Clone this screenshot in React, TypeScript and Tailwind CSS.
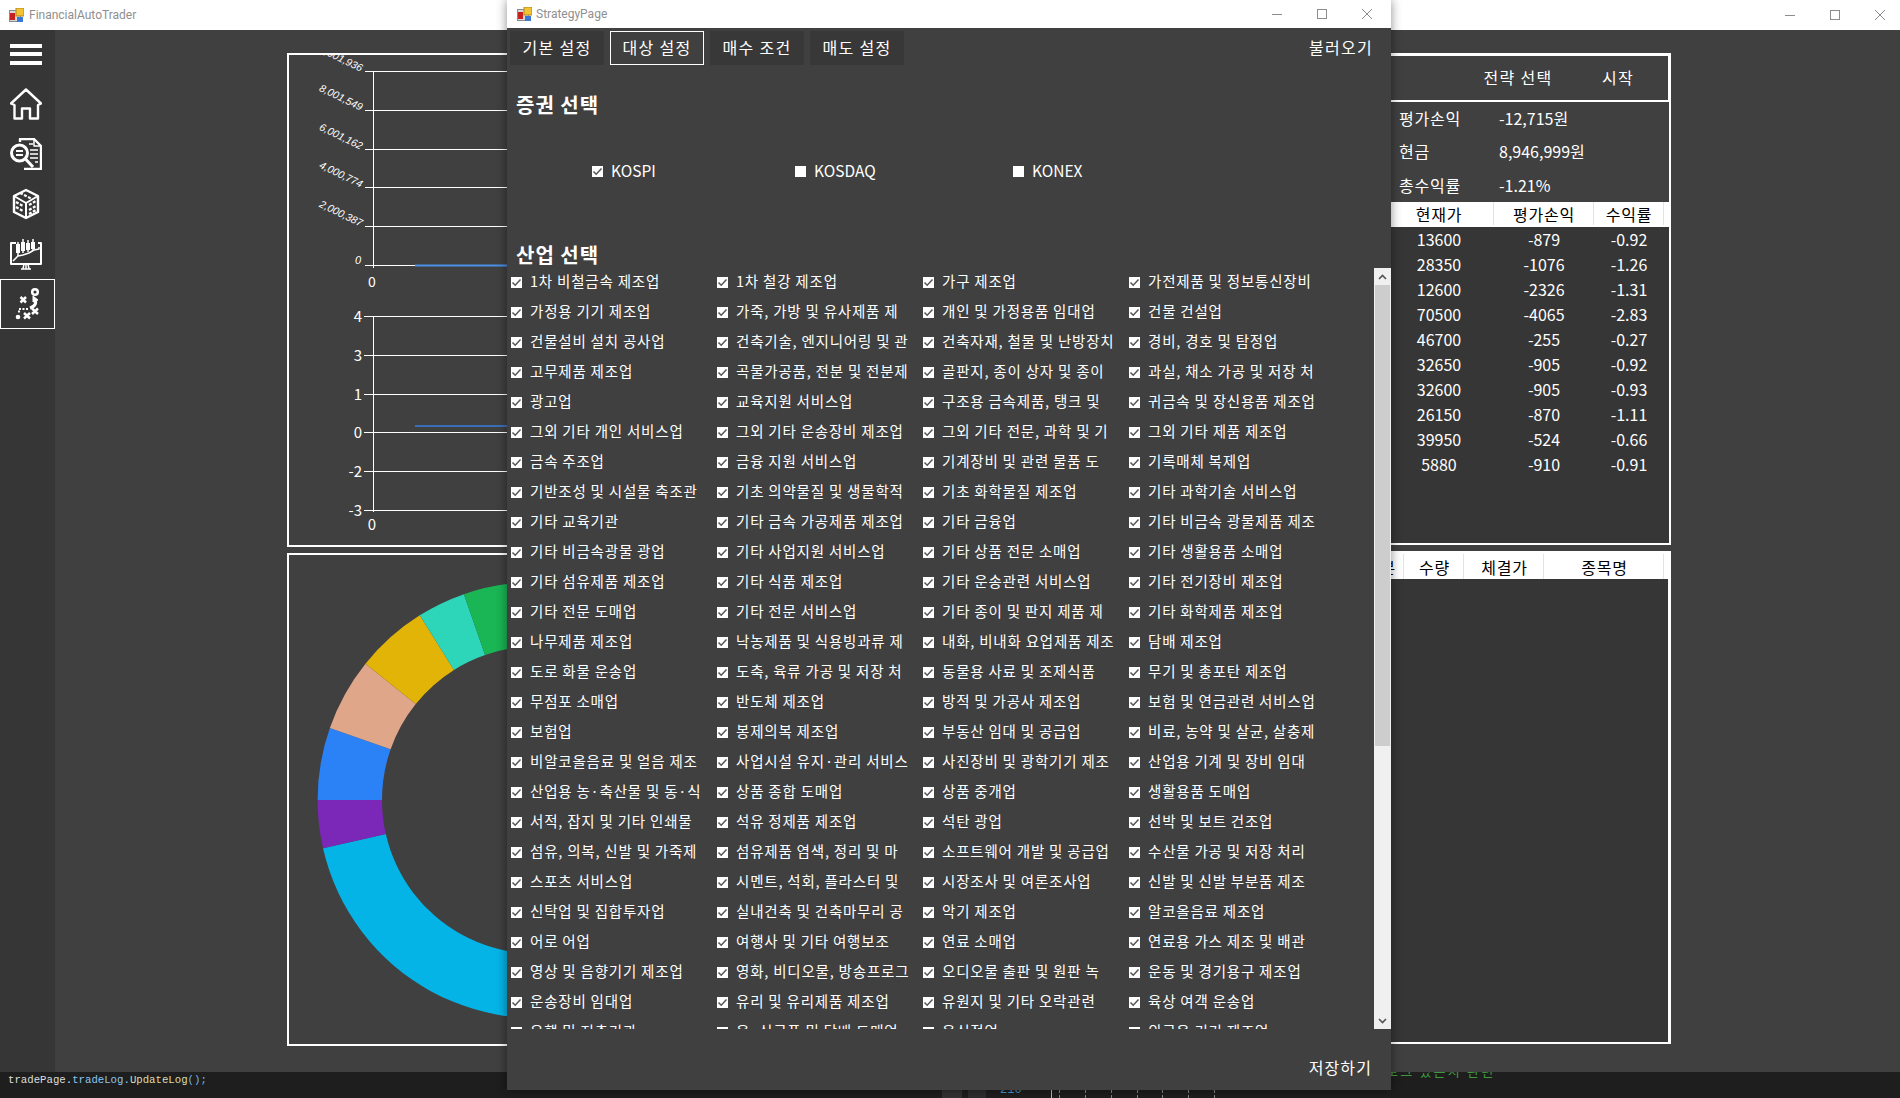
import React from "react";

const ITEMS: string[][] = [
  ["1차 비철금속 제조업", "1차 철강 제조업", "가구 제조업", "가전제품 및 정보통신장비"],
  ["가정용 기기 제조업", "가죽, 가방 및 유사제품 제", "개인 및 가정용품 임대업", "건물 건설업"],
  ["건물설비 설치 공사업", "건축기술, 엔지니어링 및 관", "건축자재, 철물 및 난방장치", "경비, 경호 및 탐정업"],
  ["고무제품 제조업", "곡물가공품, 전분 및 전분제", "골판지, 종이 상자 및 종이", "과실, 채소 가공 및 저장 처"],
  ["광고업", "교육지원 서비스업", "구조용 금속제품, 탱크 및", "귀금속 및 장신용품 제조업"],
  ["그외 기타 개인 서비스업", "그외 기타 운송장비 제조업", "그외 기타 전문, 과학 및 기", "그외 기타 제품 제조업"],
  ["금속 주조업", "금융 지원 서비스업", "기계장비 및 관련 물품 도", "기록매체 복제업"],
  ["기반조성 및 시설물 축조관", "기초 의약물질 및 생물학적", "기초 화학물질 제조업", "기타 과학기술 서비스업"],
  ["기타 교육기관", "기타 금속 가공제품 제조업", "기타 금융업", "기타 비금속 광물제품 제조"],
  ["기타 비금속광물 광업", "기타 사업지원 서비스업", "기타 상품 전문 소매업", "기타 생활용품 소매업"],
  ["기타 섬유제품 제조업", "기타 식품 제조업", "기타 운송관련 서비스업", "기타 전기장비 제조업"],
  ["기타 전문 도매업", "기타 전문 서비스업", "기타 종이 및 판지 제품 제", "기타 화학제품 제조업"],
  ["나무제품 제조업", "낙농제품 및 식용빙과류 제", "내화, 비내화 요업제품 제조", "담배 제조업"],
  ["도로 화물 운송업", "도축, 육류 가공 및 저장 처", "동물용 사료 및 조제식품", "무기 및 총포탄 제조업"],
  ["무점포 소매업", "반도체 제조업", "방적 및 가공사 제조업", "보험 및 연금관련 서비스업"],
  ["보험업", "봉제의복 제조업", "부동산 임대 및 공급업", "비료, 농약 및 살균, 살충제"],
  ["비알코올음료 및 얼음 제조", "사업시설 유지·관리 서비스", "사진장비 및 광학기기 제조", "산업용 기계 및 장비 임대"],
  ["산업용 농·축산물 및 동·식", "상품 종합 도매업", "상품 중개업", "생활용품 도매업"],
  ["서적, 잡지 및 기타 인쇄물", "석유 정제품 제조업", "석탄 광업", "선박 및 보트 건조업"],
  ["섬유, 의복, 신발 및 가죽제", "섬유제품 염색, 정리 및 마", "소프트웨어 개발 및 공급업", "수산물 가공 및 저장 처리"],
  ["스포츠 서비스업", "시멘트, 석회, 플라스터 및", "시장조사 및 여론조사업", "신발 및 신발 부분품 제조"],
  ["신탁업 및 집합투자업", "실내건축 및 건축마무리 공", "악기 제조업", "알코올음료 제조업"],
  ["어로 어업", "여행사 및 기타 여행보조", "연료 소매업", "연료용 가스 제조 및 배관"],
  ["영상 및 음향기기 제조업", "영화, 비디오물, 방송프로그", "오디오물 출판 및 원판 녹", "운동 및 경기용구 제조업"],
  ["운송장비 임대업", "유리 및 유리제품 제조업", "유원지 및 기타 오락관련", "육상 여객 운송업"],
  ["은행 및 저축기관", "음·식료품 및 담배 도매업", "음식점업", "의료용 기기 제조업"],
];

const ROWS = [
  ["13600", "-879", "-0.92"],
  ["28350", "-1076", "-1.26"],
  ["12600", "-2326", "-1.31"],
  ["70500", "-4065", "-2.83"],
  ["46700", "-255", "-0.27"],
  ["32650", "-905", "-0.92"],
  ["32600", "-905", "-0.93"],
  ["26150", "-870", "-1.11"],
  ["39950", "-524", "-0.66"],
  ["5880", "-910", "-0.91"],
];

function AppIcon() {
  return (
    <svg width="15" height="15" viewBox="0 0 15 15" className="shrink-0">
      <rect x="0.5" y="2.5" width="11" height="11" fill="#d8d8d8" stroke="#8a8a8a" />
      <rect x="7" y="0" width="8" height="8" fill="#f2c230" stroke="#b08a20" />
      <rect x="1" y="5" width="5" height="7" fill="#c8201c" />
      <rect x="8" y="9" width="6" height="5" fill="#3a78d8" />
    </svg>
  );
}

function WinControls() {
  return (
    <div className="flex items-center gap-[35px] text-[#8c8c8c]">
      <svg width="10" height="10" viewBox="0 0 10 10"><path d="M0 5.5H10" stroke="currentColor" /></svg>
      <svg width="10" height="10" viewBox="0 0 10 10"><rect x="0.5" y="0.5" width="9" height="9" fill="none" stroke="currentColor" /></svg>
      <svg width="10" height="10" viewBox="0 0 10 10"><path d="M0 0L10 10M10 0L0 10" stroke="currentColor" /></svg>
    </div>
  );
}

function Check({ on = true }: { on?: boolean }) {
  return (
    <span className="flex h-[11px] w-[11px] shrink-0 items-center justify-center bg-white">
      {on && (
        <svg width="11" height="11" viewBox="0 0 11 11">
          <path d="M1.5 5.5L4.2 8.2L9.5 2.5" fill="none" stroke="#555555" strokeWidth="1.5" />
        </svg>
      )}
    </span>
  );
}

function SideIcon({ children }: { children: React.ReactNode }) {
  return (
    <svg width="32" height="32" viewBox="0 0 32 32" fill="none" stroke="white" strokeWidth="2" strokeLinejoin="round" className="block">
      {children}
    </svg>
  );
}

function Sidebar() {
  return (
    <div className="flex w-[55px] shrink-0 flex-col bg-[#363636] pl-[10px] pt-[14px]">
      <div className="flex w-[32px] flex-col gap-[4px]">
        <div className="h-[4px] bg-white" />
        <div className="h-[4px] bg-white" />
        <div className="mt-[1px] h-[4px] bg-white" />
      </div>
      <div className="mt-[23px]">
        <SideIcon>
          <path d="M16 1.5L31 15.5L28 17V30.5H20V20.5H12V30.5H4.5V17L1 15.5Z" strokeWidth="2.4" />
        </SideIcon>
      </div>
      <div className="mt-[18px]">
        <SideIcon>
          <path d="M10 4V1H24L31 8V31H14" strokeWidth="2.4" />
          <path d="M24 1V8H31" strokeWidth="1.5" />
          <circle cx="9.5" cy="15" r="8" strokeWidth="3" />
          <path d="M6 13H13M6 17H13" />
          <path d="M15.5 21L23 29" strokeWidth="3" />
          <path d="M19 6H23M20 12H28M20 16H28M20 20H28M25 24H28" strokeWidth="1.5" />
        </SideIcon>
      </div>
      <div className="mt-[18px]">
        <SideIcon>
          <path d="M16 2L28 8V24L16 30L4 24V8Z" strokeWidth="2.4" />
          <path d="M4 8L16 15L28 8M16 15V30" />
          <path d="M10 5L22 11M6 14L13 18M6 19L13 23M19 17L26 13M19 22L26 18M19 26L26 22" strokeWidth="2.2" strokeDasharray="3 1.5" />
        </SideIcon>
      </div>
      <div className="mt-[18px]">
        <SideIcon>
          <path d="M6 5H1V26H31V5H28" />
          <path d="M11 31H21M16 26V31M13 31L14 26M19 31L18 26" strokeWidth="1.5" />
          <path d="M8 4V18M13 1V15M18 2V14M23 1V13" strokeWidth="1.5" />
          <rect x="6" y="6" width="4" height="9" fill="white" stroke="none" />
          <rect x="11" y="4" width="4" height="9" fill="white" stroke="none" />
          <rect x="16" y="5" width="4" height="7" fill="white" stroke="none" />
          <rect x="21" y="4" width="4" height="7" fill="white" stroke="none" />
          <path d="M3 23L8 18L13 17L19 15L24 12L29 11V9" strokeWidth="1.5" />
        </SideIcon>
      </div>
      <div className="-ml-[10px] mt-[9px] flex h-[50px] w-[55px] items-center justify-center border border-white">
        <svg width="28" height="34" viewBox="0 0 28 34" fill="none" stroke="white" strokeWidth="2.5">
          <circle cx="21" cy="5" r="2.8" />
          <path d="M20 12C23 15 22 19 16 21" strokeWidth="3" />
          <path d="M19 9L24 13L19 15Z" fill="white" strokeWidth="1" />
          <path d="M14 22H5V27" strokeWidth="2" strokeDasharray="2 1.5" />
          <circle cx="4" cy="30" r="2.3" fill="white" stroke="none" />
          <path d="M6.5 10L12 15.5M12 10L6.5 15.5M18 21.5L24 27M24 21.5L18 27M10 26L16 31.5M16 26L10 31.5" />
        </svg>
      </div>
    </div>
  );
}

function polar(r: number, deg: number) {
  const t = (deg * Math.PI) / 180;
  return `${(535.6 + r * Math.cos(t)).toFixed(2)} ${(800 + r * Math.sin(t)).toFixed(2)}`;
}

function seg(a0: number, a1: number) {
  const R = 218;
  const r = 153.6;
  return `M${polar(R, a0)}A${R} ${R} 0 0 1 ${polar(R, a1)}L${polar(r, a1)}A${r} ${r} 0 0 0 ${polar(r, a0)}Z`;
}

const SEGMENTS: [number, number, string][] = [
  [70, 167.2, "#04b4e6"],
  [167.2, 180, "#7b28b8"],
  [180, 199.3, "#2a82f6"],
  [199.3, 218.7, "#e0a68a"],
  [218.7, 237.9, "#e2b408"],
  [237.9, 250.8, "#2dd6b8"],
  [250.8, 290, "#1ab554"],
];

function LineCharts() {
  const top = [
    [71, "10,001,936"],
    [110, "8,001,549"],
    [149, "6,001,162"],
    [187, "4,000,774"],
    [226, "2,000,387"],
  ] as [number, string][];
  const lower = [
    [316, "4"],
    [355, "3"],
    [394, "1"],
    [432, "0"],
    [471, "-2"],
    [510, "-3"],
  ] as [number, string][];
  return (
    <svg viewBox="289 55 811 490" className="block h-full w-full" fill="white">
      {top.map(([y, t]) => (
        <g key={t}>
          <line x1="365" x2="1100" y1={y + 0.5} y2={y + 0.5} stroke="white" />
          <text x="361" y={y + 1} textAnchor="end" fontSize="10.5" fontStyle="italic" fontFamily="'Liberation Sans', sans-serif" transform={`rotate(26 361 ${y})`}>{t}</text>
        </g>
      ))}
      <line x1="365" x2="1100" y1="265.5" y2="265.5" stroke="white" />
      <line x1="415" x2="1100" y1="265.5" y2="265.5" stroke="#4a8fe8" strokeWidth="2" />
      <text x="361" y="264" textAnchor="end" fontSize="11" fontStyle="italic" fontFamily="'Liberation Sans', sans-serif">0</text>
      <line x1="373.5" x2="373.5" y1="71" y2="268" stroke="white" />
      <text x="372" y="287" textAnchor="middle" fontSize="14">0</text>

      {lower.map(([y, t]) => (
        <g key={t}>
          <line x1="364" x2="1100" y1={y + 0.5} y2={y + 0.5} stroke="white" />
          <text x="362" y={y + 6} textAnchor="end" fontSize="15">{t}</text>
        </g>
      ))}
      <line x1="373.5" x2="373.5" y1="316" y2="512" stroke="white" />
      <line x1="415" x2="1100" y1="426" y2="426" stroke="#3a6fb8" strokeWidth="2" />
      <text x="372" y="530" textAnchor="middle" fontSize="15">0</text>
    </svg>
  );
}

function Donut() {
  return (
    <svg viewBox="289 555 811 489" className="block h-full w-full">
      {SEGMENTS.map(([a, b, c]) => (
        <path key={c} d={seg(a, b)} fill={c} />
      ))}
    </svg>
  );
}

function RightPanels() {
  return (
    <div className="flex w-[571px] shrink-0 flex-col text-[16px] text-white">
      <div className="flex h-[49px] justify-end border-b-2 border-r-[3px] border-t-[3px] border-white pb-[2px]">
        <div className="flex w-[100px] items-center justify-center tracking-[1.3px]">전략 선택</div>
        <div className="flex w-[100px] items-center justify-center tracking-[1.3px]">시작</div>
      </div>
      <div className="flex h-[443px] flex-col border-b-2 border-r-2 border-white">
        <div className="h-[100px] pl-[299px]">
          {[
            ["평가손익", "-12,715원"],
            ["현금", "8,946,999원"],
            ["총수익률", "-1.21%"],
          ].map(([a, b], i) => (
            <div key={a} className={i === 2 ? "flex h-[33px] items-center" : "flex h-[33px] items-center pb-[2px]"}>
              <span className="w-[100px] tracking-[0.8px]">{a}</span>
              <span>{b}</span>
            </div>
          ))}
        </div>
        <div className="flex h-[25px] bg-white pb-[2px] text-black">
          <div className="w-[284px]" />
          <div className="flex w-[110px] items-center justify-center border-r border-[#e3e3e3] pl-[1px] tracking-[0.8px]">현재가</div>
          <div className="flex w-[100px] items-center justify-center border-r border-[#e3e3e3] pl-[1px] tracking-[0.8px]">평가손익</div>
          <div className="flex w-[70px] items-center justify-center border-r border-[#e3e3e3] pl-[1px] tracking-[0.8px]">수익률</div>
        </div>
        <div className="flex-1 bg-[#363636]">
          {ROWS.map((r) => (
            <div key={r[0]} className="flex h-[25px] items-center pb-[2px]">
              <div className="w-[284px]" />
              <div className="w-[110px] text-center">{r[0]}</div>
              <div className="w-[100px] text-center">{r[1]}</div>
              <div className="w-[70px] text-center">{r[2]}</div>
            </div>
          ))}
        </div>
      </div>
      <div className="mt-[6px] flex h-[493px] flex-col border-b-2 border-r-[3px] border-t-[3px] border-white">
        <div className="flex h-[25px] bg-white text-black">
          <div className="w-[244px]" />
          <div className="flex w-[60px] items-center justify-center border-r border-[#e3e3e3] pl-[14px] tracking-[0.8px]">구분</div>
          <div className="flex w-[60px] items-center justify-center border-r border-[#e3e3e3] pl-[2px] tracking-[0.8px]">수량</div>
          <div className="flex w-[80px] items-center justify-center border-r border-[#e3e3e3] pl-[2px] tracking-[0.8px]">체결가</div>
          <div className="flex w-[120px] items-center justify-center border-r border-[#e3e3e3] pl-[2px] tracking-[0.8px]">종목명</div>
        </div>
        <div className="flex-1 bg-[#363636]" />
      </div>
    </div>
  );
}

function ScrollBar() {
  return (
    <div className="flex w-[17px] shrink-0 flex-col bg-[#f0f0f0]">
      <div className="flex h-[17px] items-center justify-center">
        <svg width="9" height="6" viewBox="0 0 9 6"><path d="M1 5L4.5 1.5L8 5" fill="none" stroke="#555555" strokeWidth="1.6" /></svg>
      </div>
      <div className="mx-[1px] h-[461px] bg-[#cdcdcd]" />
      <div className="flex-1" />
      <div className="flex h-[17px] items-center justify-center">
        <svg width="9" height="6" viewBox="0 0 9 6"><path d="M1 1L4.5 4.5L8 1" fill="none" stroke="#555555" strokeWidth="1.6" /></svg>
      </div>
    </div>
  );
}

function StrategyWindow() {
  return (
    <div className="absolute left-[507px] top-0 flex h-[1090px] w-[884px] flex-col bg-[#404040] text-white shadow-[0_0_10px_rgba(0,0,0,0.45)]">
      <div className="flex h-[28px] shrink-0 items-center justify-between bg-white pl-[10px] pr-[19px]">
        <div className="flex items-center gap-[4px] font-['Roboto',sans-serif] text-[12px] text-[#8f8f8f]">
          <AppIcon />
          <span>StrategyPage</span>
        </div>
        <WinControls />
      </div>
      <div className="flex h-[37px] shrink-0 items-end gap-[6px] pl-[3px] pr-[18px] text-[16px] tracking-[1.3px]">
        <div className="flex h-[34px] w-[94px] items-center justify-center bg-[#383838] pb-[2px]">기본 설정</div>
        <div className="flex h-[34px] w-[94px] items-center justify-center border border-white pb-[2px]">대상 설정</div>
        <div className="flex h-[34px] w-[94px] items-center justify-center bg-[#383838] pb-[2px]">매수 조건</div>
        <div className="flex h-[34px] w-[94px] items-center justify-center bg-[#383838] pb-[2px]">매도 설정</div>
        <div className="ml-auto flex h-[34px] items-center pb-[2px]">불러오기</div>
      </div>
      <div className="mt-[15px] flex h-[50px] shrink-0 items-center pl-[9px] text-[20px] font-bold tracking-[1px]">증권 선택</div>
      <div className="mt-[16px] flex h-[50px] shrink-0 items-center pl-[85px] text-[15.5px]">
        <div className="flex w-[203px] items-center gap-[8px]"><Check /><span>KOSPI</span></div>
        <div className="flex w-[218px] items-center gap-[8px]"><Check on={false} /><span>KOSDAQ</span></div>
        <div className="flex items-center gap-[8px]"><Check on={false} /><span>KONEX</span></div>
      </div>
      <div className="mt-[46px] flex h-[26px] shrink-0 items-center pl-[9px] text-[20px] font-bold tracking-[1px]">산업 선택</div>
      <div className="flex h-[761px] shrink-0 overflow-hidden">
        <div className="w-[867px] shrink-0 overflow-hidden pl-[4px] text-[14.5px] tracking-[0.8px]">
          <div className="-mt-[1px]">
            {ITEMS.map((row) => (
              <div key={row[0]} className="flex h-[30px] shrink-0 items-center">
                {row.map((t) => (
                  <div key={t} className="flex w-[206px] shrink-0 items-center gap-[8px] whitespace-nowrap">
                    <Check />
                    <span className="pb-[2px]">{t}</span>
                  </div>
                ))}
              </div>
            ))}
          </div>
        </div>
        <ScrollBar />
      </div>
      <div className="flex flex-1 items-end justify-end pb-[11px] pr-[19px] text-[16px] tracking-[1.1px]">저장하기</div>
    </div>
  );
}

export default function App() {
  return (
    <div className="relative flex h-[1098px] w-[1900px] flex-col overflow-hidden bg-[#404040] font-['Noto_Sans_CJK_KR','Noto_Sans',sans-serif]">
      <div className="flex h-[30px] shrink-0 items-center justify-between bg-white pl-[9px] pr-[15px]">
        <div className="flex items-center gap-[5px] font-['Roboto',sans-serif] text-[12px] text-[#8f8f8f]">
          <AppIcon />
          <span>FinancialAutoTrader</span>
        </div>
        <WinControls />
      </div>

      <div className="flex h-[1042px] shrink-0">
        <Sidebar />
        <div className="flex flex-1 pl-[232px] pt-[23px]">
          <div className="flex w-[813px] shrink-0 flex-col">
            <div className="h-[494px] overflow-hidden border-2 border-r-0 border-white"><LineCharts /></div>
            <div className="mt-[6px] h-[493px] overflow-hidden border-2 border-r-0 border-white"><Donut /></div>
          </div>
          <RightPanels />
        </div>
      </div>

      <div className="relative flex-1 overflow-hidden bg-[#1e1e1e] pl-[8px] pt-[1px] font-['Liberation_Mono',monospace] text-[10.7px] leading-[15px]">
        <span className="text-[#dcdcdc]">tradePage.</span>
        <span className="text-[#8cc4f0]">tradeLog.</span>
        <span className="text-[#dcdcaa]">UpdateLog</span>
        <span className="text-[#6fb7e8]">();</span>
        <span className="absolute left-[1386px] top-[-9px] font-['Noto_Sans_CJK_KR',sans-serif] text-[13px] tracking-[2.2px] text-[#3f9a3f]">로그 있는지 관련</span>
        <span className="absolute left-[1000px] top-[11px] text-[12px] text-[#3f9ad0]">210</span>
        <div className="absolute left-[942px] top-[18px] h-[8px] w-[20px] bg-[#333333]" />
        <div className="absolute left-[968px] top-[18px] h-[8px] w-[18px] bg-[#2e2e2e]" />
        <div className="absolute left-[1051px] top-[18px] h-[8px] w-px bg-[#bbbbbb]" />
        {[1059, 1085, 1111, 1137, 1162, 1188, 1214].map((x) => (
          <div key={x} className="absolute top-[18px] h-[8px] w-px border-l border-dashed border-[#888888]" style={{ left: x }} />
        ))}
      </div>

      <StrategyWindow />
    </div>
  );
}
